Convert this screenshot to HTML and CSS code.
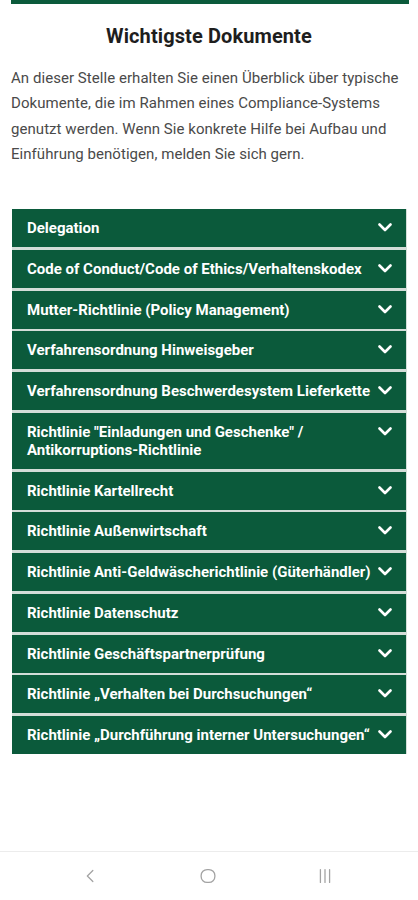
FILE: index.html
```
<!DOCTYPE html>
<html lang="de">
<head>
<meta charset="utf-8">
<link rel="stylesheet" href="styles.css">
</head>
<body>
<div class="page">
  <div class="topbar"></div>
  <h1 class="title">Wichtigste Dokumente</h1>
  <p class="intro">An dieser Stelle erhalten Sie einen Überblick über typische Dokumente, die im Rahmen eines Compliance-Systems genutzt werden. Wenn Sie konkrete Hilfe bei Aufbau und Einführung benötigen, melden Sie sich gern.</p>
  <ul class="list">
    <li class="item"><span class="label">Delegation</span><svg class="chev" viewBox="0 0 14 9"><path d="M1.5 1.5 7 7l5.5-5.5"/></svg></li>
    <li class="item"><span class="label">Code of Conduct/Code of Ethics/Verhaltenskodex</span><svg class="chev" viewBox="0 0 14 9"><path d="M1.5 1.5 7 7l5.5-5.5"/></svg></li>
    <li class="item"><span class="label">Mutter-Richtlinie (Policy Management)</span><svg class="chev" viewBox="0 0 14 9"><path d="M1.5 1.5 7 7l5.5-5.5"/></svg></li>
    <li class="item"><span class="label">Verfahrensordnung Hinweisgeber</span><svg class="chev" viewBox="0 0 14 9"><path d="M1.5 1.5 7 7l5.5-5.5"/></svg></li>
    <li class="item"><span class="label">Verfahrensordnung Beschwerdesystem Lieferkette</span><svg class="chev" viewBox="0 0 14 9"><path d="M1.5 1.5 7 7l5.5-5.5"/></svg></li>
    <li class="item"><span class="label">Richtlinie "Einladungen und Geschenke" /<br>Antikorruptions-Richtlinie</span><svg class="chev" viewBox="0 0 14 9"><path d="M1.5 1.5 7 7l5.5-5.5"/></svg></li>
    <li class="item"><span class="label">Richtlinie Kartellrecht</span><svg class="chev" viewBox="0 0 14 9"><path d="M1.5 1.5 7 7l5.5-5.5"/></svg></li>
    <li class="item"><span class="label">Richtlinie Außenwirtschaft</span><svg class="chev" viewBox="0 0 14 9"><path d="M1.5 1.5 7 7l5.5-5.5"/></svg></li>
    <li class="item"><span class="label">Richtlinie Anti-Geldwäscherichtlinie (Güterhändler)</span><svg class="chev" viewBox="0 0 14 9"><path d="M1.5 1.5 7 7l5.5-5.5"/></svg></li>
    <li class="item"><span class="label">Richtlinie Datenschutz</span><svg class="chev" viewBox="0 0 14 9"><path d="M1.5 1.5 7 7l5.5-5.5"/></svg></li>
    <li class="item"><span class="label">Richtlinie Geschäftspartnerprüfung</span><svg class="chev" viewBox="0 0 14 9"><path d="M1.5 1.5 7 7l5.5-5.5"/></svg></li>
    <li class="item"><span class="label">Richtlinie „Verhalten bei Durchsuchungen“</span><svg class="chev" viewBox="0 0 14 9"><path d="M1.5 1.5 7 7l5.5-5.5"/></svg></li>
    <li class="item"><span class="label">Richtlinie „Durchführung interner Untersuchungen“</span><svg class="chev" viewBox="0 0 14 9"><path d="M1.5 1.5 7 7l5.5-5.5"/></svg></li>
  </ul>
  <nav class="sysnav">
    <svg class="nav-icon" viewBox="0 0 24 24"><path d="M14 6 8 12l6 6"/></svg>
    <svg class="nav-icon" viewBox="0 0 24 24"><rect x="4.5" y="5" width="15" height="14" rx="6.5"/></svg>
    <svg class="nav-icon" viewBox="0 0 24 24"><path d="M7 5v14M12 5v14M17 5v14"/></svg>
  </nav>
</div>
</body>
</html>
```

FILE: styles.css
```
* { box-sizing: border-box; }
html, body { margin: 0; padding: 0; background: #fff; }
body { font-family: Roboto, "Noto Sans", "Liberation Sans", sans-serif; }
.page {
  height: 900px;
  display: flex;
  flex-direction: column;
}
.topbar {
  height: 4px;
  margin: 0 9px 0 11px;
  background: #0b5a3b;
}
.title {
  margin: 20px 0 0;
  text-align: center;
  font-size: 20px;
  font-weight: 700;
  line-height: 24px;
  letter-spacing: 0.1px;
  color: #1e1e1e;
}
.intro {
  margin: 18px 6px 0 11px;
  font-size: 15px;
  line-height: 25.3px;
  letter-spacing: 0.05px;
  color: #4a4a4a;
}
.list {
  list-style: none;
  margin: 42px 11px 0 12px;
  padding: 0;
  display: flex;
  flex-direction: column;
  gap: 2.75px;
  background: #d3ddd8;
}
.item {
  background: #0b5a3b;
  color: #fff;
  display: flex;
  align-items: flex-start;
  justify-content: space-between;
  padding: 10px 14px 10px 15px;
  border-right: 1.5px solid #d5dfd9;
}
.label {
  font-size: 15px;
  font-weight: 700;
  line-height: 18px;
}
.chev {
  width: 14px;
  height: 9px;
  margin-top: 4px;
  flex: none;
  fill: none;
  stroke: #fff;
  stroke-width: 2.6;
  stroke-linecap: round;
  stroke-linejoin: round;
}
.sysnav {
  margin-top: auto;
  height: 49px;
  border-top: 1.5px solid #ececec;
  display: flex;
  justify-content: space-between;
  align-items: center;
  padding: 0 82px 0 80px;
}
.nav-icon {
  width: 22px;
  height: 22px;
  fill: none;
  stroke: #a3a3a3;
  stroke-width: 1.4;
  stroke-linecap: round;
  stroke-linejoin: round;
}
```
